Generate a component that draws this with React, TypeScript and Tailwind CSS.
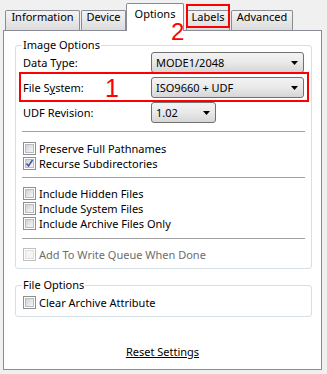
import clsx from "clsx";

type TabProps = { label: string; active?: boolean; className?: string };

function Tab({ label, active, className }: TabProps) {
  return (
    <div
      className={clsx(
        "flex shrink-0 justify-center rounded-t-[2px] border-x border-t border-[#898c95]",
        active
          ? "relative z-10 -mb-px h-[28px] bg-white pt-[2px] leading-[15px]"
          : "h-[20px] bg-linear-to-b from-[#f4f4f4] to-[#dcdcdc] leading-[11px]",
        className
      )}
    >
      {label}
    </div>
  );
}

function Combo({ value, className }: { value: string; className?: string }) {
  return (
    <div
      className={clsx(
        "flex h-[21px] items-center justify-between rounded-[3px] border border-[#707070] bg-linear-to-b from-[#f3f3f3] via-[#e9e9e9] to-[#d6d6d6] pl-[4px] pr-[5px] leading-[15px]",
        className
      )}
    >
      <span>{value}</span>
      <svg width="7" height="4" viewBox="0 0 7 4">
        <path d="M0 0h7L3.5 4z" fill="#000" />
      </svg>
    </div>
  );
}

function Check({ label, checked, disabled }: { label: string; checked?: boolean; disabled?: boolean }) {
  return (
    <div className={clsx("flex h-[15px] items-center gap-[3px] leading-[15px]", disabled && "text-[#6d6d6d]")}>
      <span
        className={clsx(
          "relative flex h-[13px] w-[13px] shrink-0 items-center justify-center border bg-white",
          disabled ? "border-[#c0c0c0]" : "border-[#8e8f8f]"
        )}
      >
        <span
          className={clsx(
            "h-[9px] w-[9px] border",
            disabled
              ? "border-[#e0e0e0] bg-[#f4f4f4]"
              : "border-[#b8bcc0] bg-linear-to-br from-[#cfd2d6] to-[#f7f7f7]"
          )}
        />
        {checked && (
          <svg className="absolute left-0 top-0" width="11" height="11" viewBox="0 0 11 11">
            <path d="M2.5 5.5 4.5 8 8.5 2" fill="none" stroke="#3c5595" strokeWidth="1.5" />
          </svg>
        )}
      </span>
      <span>{label}</span>
    </div>
  );
}

function Rule({ className }: { className?: string }) {
  return <div className={clsx("-mx-px h-px bg-[#a0a0a0]", className)} />;
}

export default function App() {
  return (
    <div className="relative h-[374px] w-[327px] overflow-hidden bg-[#f0f0f0] font-['Noto_Sans',sans-serif] text-[11px] text-black">
      <div className="flex h-[30px] items-end">
        <Tab label="Information" className="ml-[5px] w-[75px]" />
        <Tab label="Device" className="ml-[1px] w-[45px]" />
        <Tab label="Options" active className="w-[58px]" />
        <Tab label="Labels" className="ml-[2px] w-[44px]" />
        <Tab label="Advanced" className="ml-[1px] w-[62px]" />
      </div>

      <div className="ml-[3px] flex h-[340px] w-[319px] flex-col border border-[#898c95] bg-white">
        <fieldset className="ml-[11px] mr-[9px] mt-[7px] rounded-[3px] border border-[#d5dfe5] px-[7px] pb-[6px]">
          <legend className="-ml-px px-px leading-[14px]">Image Options</legend>
          <div className="flex flex-col gap-[4px]">
            <div className="flex h-[21px] items-center">
              <span className="w-[128px] leading-[15px]">Data Type:</span>
              <Combo value="MODE1/2048" className="w-[153px]" />
            </div>
            <div className="flex h-[21px] items-center">
              <span className="w-[128px] leading-[15px]">
                File S<span className="underline">y</span>stem:
              </span>
              <Combo value="ISO9660 + UDF" className="w-[153px]" />
            </div>
            <div className="flex h-[21px] items-center">
              <span className="w-[128px] leading-[15px]">UDF Revision:</span>
              <Combo value="1.02" className="w-[65px]" />
            </div>
          </div>
          <Rule className="mt-[8px]" />
          <div className="mt-[9px] flex flex-col">
            <Check label="Preserve Full Pathnames" />
            <Check label="Recurse Subdirectories" checked />
          </div>
          <Rule className="mt-[6px]" />
          <div className="mt-[8px] flex flex-col">
            <Check label="Include Hidden Files" />
            <Check label="Include System Files" />
            <Check label="Include Archive Files Only" />
          </div>
          <Rule className="mt-[7px]" />
          <div className="mt-[8px]">
            <Check label="Add To Write Queue When Done" disabled />
          </div>
        </fieldset>

        <fieldset className="ml-[11px] mr-[9px] mt-[9px] rounded-[3px] border border-[#d5dfe5] px-[7px] pb-[6px]">
          <legend className="-ml-px px-px leading-[14px]">File Options</legend>
          <div className="mt-[3px]">
            <Check label="Clear Archive Attribute" />
          </div>
        </fieldset>

        <div className="mt-[27px] text-center leading-[15px]">
          <span className="underline underline-offset-1">Reset Settings</span>
        </div>
      </div>

      {/* red annotations drawn over the dialog */}
      <div className="absolute left-[186px] top-[4px] z-20 h-[24px] w-[44px] border-2 border-[#ff0000]" />
      <div className="absolute left-[171px] top-[20px] z-20 font-['Liberation_Sans',sans-serif] text-[24px] leading-none text-[#ff0000]">
        2
      </div>
      <div className="absolute left-[19px] top-[72px] z-20 h-[30px] w-[290px] border-2 border-[#ff0000]" />
      <div className="absolute left-[105px] top-[76px] z-20 font-['Liberation_Sans',sans-serif] text-[25px] leading-none text-[#ff0000]">
        1
      </div>
    </div>
  );
}
